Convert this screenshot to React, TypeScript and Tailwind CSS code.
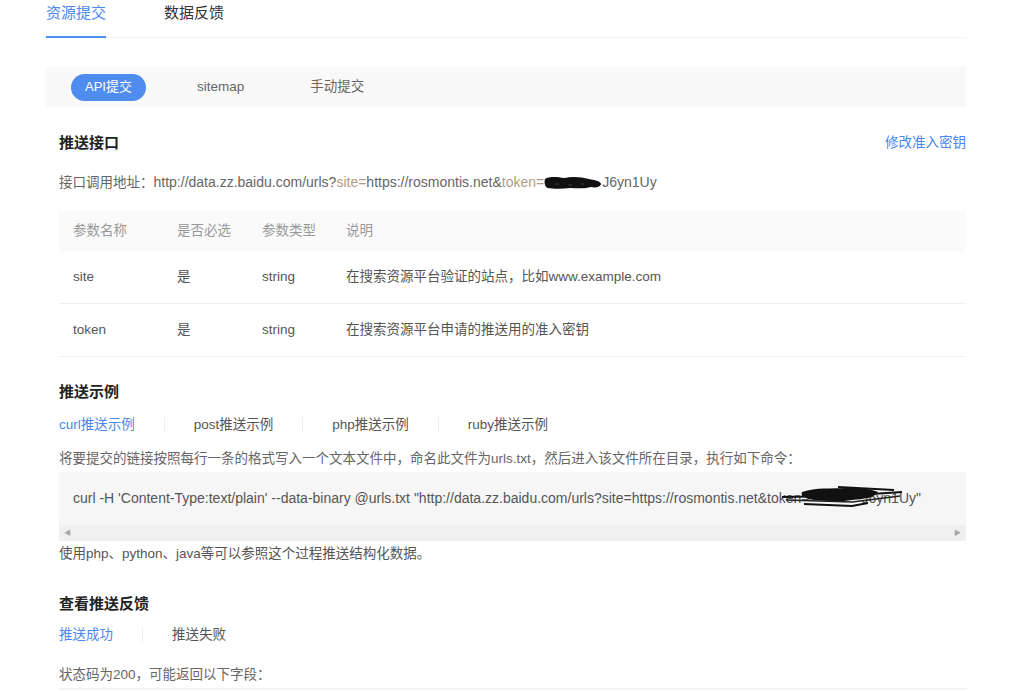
const blue = "text-[#4a87ef]";

function TopTabs() {
  return (
    <div className="flex border-b border-[#f2f2f2] h-[38px] text-[15px]">
      <div className={`h-[38px] pt-[1px] leading-[24px] border-b-2 border-[#4f8cf0] ${blue}`}>资源提交</div>
      <div className="h-[38px] pt-[1px] leading-[24px] ml-[58px] text-[#333]">数据反馈</div>
    </div>
  );
}

function SubmitTypes() {
  return (
    <div className="mt-[29px] h-[40px] bg-[#f9f9f9] flex items-center text-[13.5px] text-[#666]">
      <div className="ml-[25px] w-[75px] h-[27px] rounded-full bg-[#4f8cf0] text-white text-[13px] flex items-center justify-center">
        API提交
      </div>
      <div className="ml-[51px]">sitemap</div>
      <div className="ml-[66px]">手动提交</div>
    </div>
  );
}

function Blob() {
  return (
    <svg width="58" height="15" viewBox="0 0 62 15" preserveAspectRatio="none" className="inline-block align-[-3px]">
      <path
        d="M1 4 C6 1 14 2 22 3 C30 1 40 2 48 4 C54 5 60 6 61 9 C60 12 56 13 50 12 C44 14 36 13 28 13 C20 14 10 14 4 13 C1 12 0 8 1 4 Z"
        fill="#111"
      />
      <path d="M12 9 L16 9 M26 10 L30 10 M40 9 L43 9" stroke="#444" strokeWidth="1" />
    </svg>
  );
}

function Scribble() {
  return (
    <svg
      width="124"
      height="24"
      viewBox="0 0 124 24"
      className="absolute left-[-4px] top-[-6px] pointer-events-none"
    >
      <path d="M0 13 L60 12 L120 8" stroke="#111" strokeWidth="2" fill="none" />
      <path d="M4 16 L70 18 L118 12" stroke="#222" strokeWidth="1.5" fill="none" />
      <path
        d="M20 8 C34 3 50 5 64 4 C76 3 88 5 96 8 C92 14 82 15 70 16 C58 18 44 17 32 16 C24 15 18 12 20 8 Z"
        fill="#111"
      />
      <path d="M22 20 L70 22 L86 19" stroke="#111" strokeWidth="2" fill="none" />
      <path d="M56 3 L112 6" stroke="#111" strokeWidth="2" fill="none" />
    </svg>
  );
}

const params = [
  { name: "site", req: "是", type: "string", desc: "在搜索资源平台验证的站点，比如www.example.com" },
  { name: "token", req: "是", type: "string", desc: "在搜索资源平台申请的推送用的准入密钥" },
];

function ParamTable() {
  return (
    <div className="mt-[17px] text-[13.5px]">
      <div className="h-[40px] bg-[#fafafa] flex items-center text-[#999]">
        <div className="w-[118px] pl-[14px]">参数名称</div>
        <div className="w-[85px]">是否必选</div>
        <div className="w-[84px]">参数类型</div>
        <div>说明</div>
      </div>
      {params.map((p) => (
        <div key={p.name} className="h-[53px] border-b border-[#f0f0f0] flex items-center text-[#555]">
          <div className="w-[118px] pl-[14px]">{p.name}</div>
          <div className="w-[85px]">{p.req}</div>
          <div className="w-[84px]">{p.type}</div>
          <div>{p.desc}</div>
        </div>
      ))}
    </div>
  );
}

function SubTabs({ items }: { items: string[] }) {
  return (
    <div className="flex items-center leading-[22px] text-[13.5px]">
      {items.map((t, i) => (
        <div key={t} className="flex items-center">
          {i > 0 && <div className="w-px h-[16px] bg-[#eeeeee]" />}
          <div className={`${i > 0 ? "px-[29px] text-[#555]" : `pr-[29px] ${blue}`}`}>{t}</div>
        </div>
      ))}
    </div>
  );
}

function CodeBox() {
  return (
    <div className="mt-[2px] h-[69px] bg-[#f6f6f6] flex flex-col">
      <div className="flex-1 pl-[14px] pt-[15px] leading-[22px] text-[14px] text-[#555] whitespace-nowrap overflow-hidden">
        curl -H 'Content-Type:text/plain' --data-binary @urls.txt "http://data.zz.baidu.com/urls?site=https://rosmontis.net&amp;tok
        <span className="relative">
          en=<span className="inline-block w-[52px]" />J6yn1Uy"
          <Scribble />
        </span>
      </div>
      <div className="h-[16px] bg-[#f0f0f0] flex items-center justify-between px-[5px] text-[7px] text-[#a8a8a8]">
        <span>◀</span>
        <span>▶</span>
      </div>
    </div>
  );
}

export default function App() {
  return (
    <div className="min-h-screen bg-white font-['Liberation_Sans','Noto_Sans_CJK_SC',sans-serif]">
      <div className="ml-[46px] w-[920px]">
        <TopTabs />
        <SubmitTypes />

        <div className="pl-[13px]">
          <div className="mt-[25px] flex items-center justify-between leading-[22px]">
            <div className="text-[15px] font-bold text-[#222]">推送接口</div>
            <a href="#" className={`text-[13.5px] ${blue}`}>修改准入密钥</a>
          </div>

          <div className="mt-[17px] leading-[22px] text-[14px] text-[#666] whitespace-nowrap">
            <span className="text-[13.5px]">接口调用地址：</span>http://data.zz.baidu.com/urls?<span className="text-[#b39b86]">site=</span>https://rosmontis.net&amp;<span className="text-[#b39b86]">token=</span><Blob />J6yn1Uy
          </div>

          <ParamTable />

          <div className="mt-[24px] text-[15px] font-bold text-[#222] leading-[22px]">推送示例</div>
          <div className="mt-[11px]">
            <SubTabs items={["curl推送示例", "post推送示例", "php推送示例", "ruby推送示例"]} />
          </div>
          <div className="mt-[12px] leading-[22px] text-[13.5px] text-[#666]">
            将要提交的链接按照每行一条的格式写入一个文本文件中，命名此文件为urls.txt，然后进入该文件所在目录，执行如下命令：
          </div>
          <CodeBox />
          <div className="mt-[2px] leading-[22px] text-[13.5px] text-[#555]">
            使用php、python、java等可以参照这个过程推送结构化数据。
          </div>

          <div className="mt-[28px] text-[15px] font-bold text-[#222] leading-[22px]">查看推送反馈</div>
          <div className="mt-[9px]">
            <SubTabs items={["推送成功", "推送失败"]} />
          </div>
          <div className="mt-[18px] leading-[22px] text-[13.5px] text-[#666]">
            状态码为200，可能返回以下字段：
          </div>
          <div className="mt-[2px] h-[40px] bg-[#fafafa] border-t border-[#f0f0f0]" />
        </div>
      </div>
    </div>
  );
}
